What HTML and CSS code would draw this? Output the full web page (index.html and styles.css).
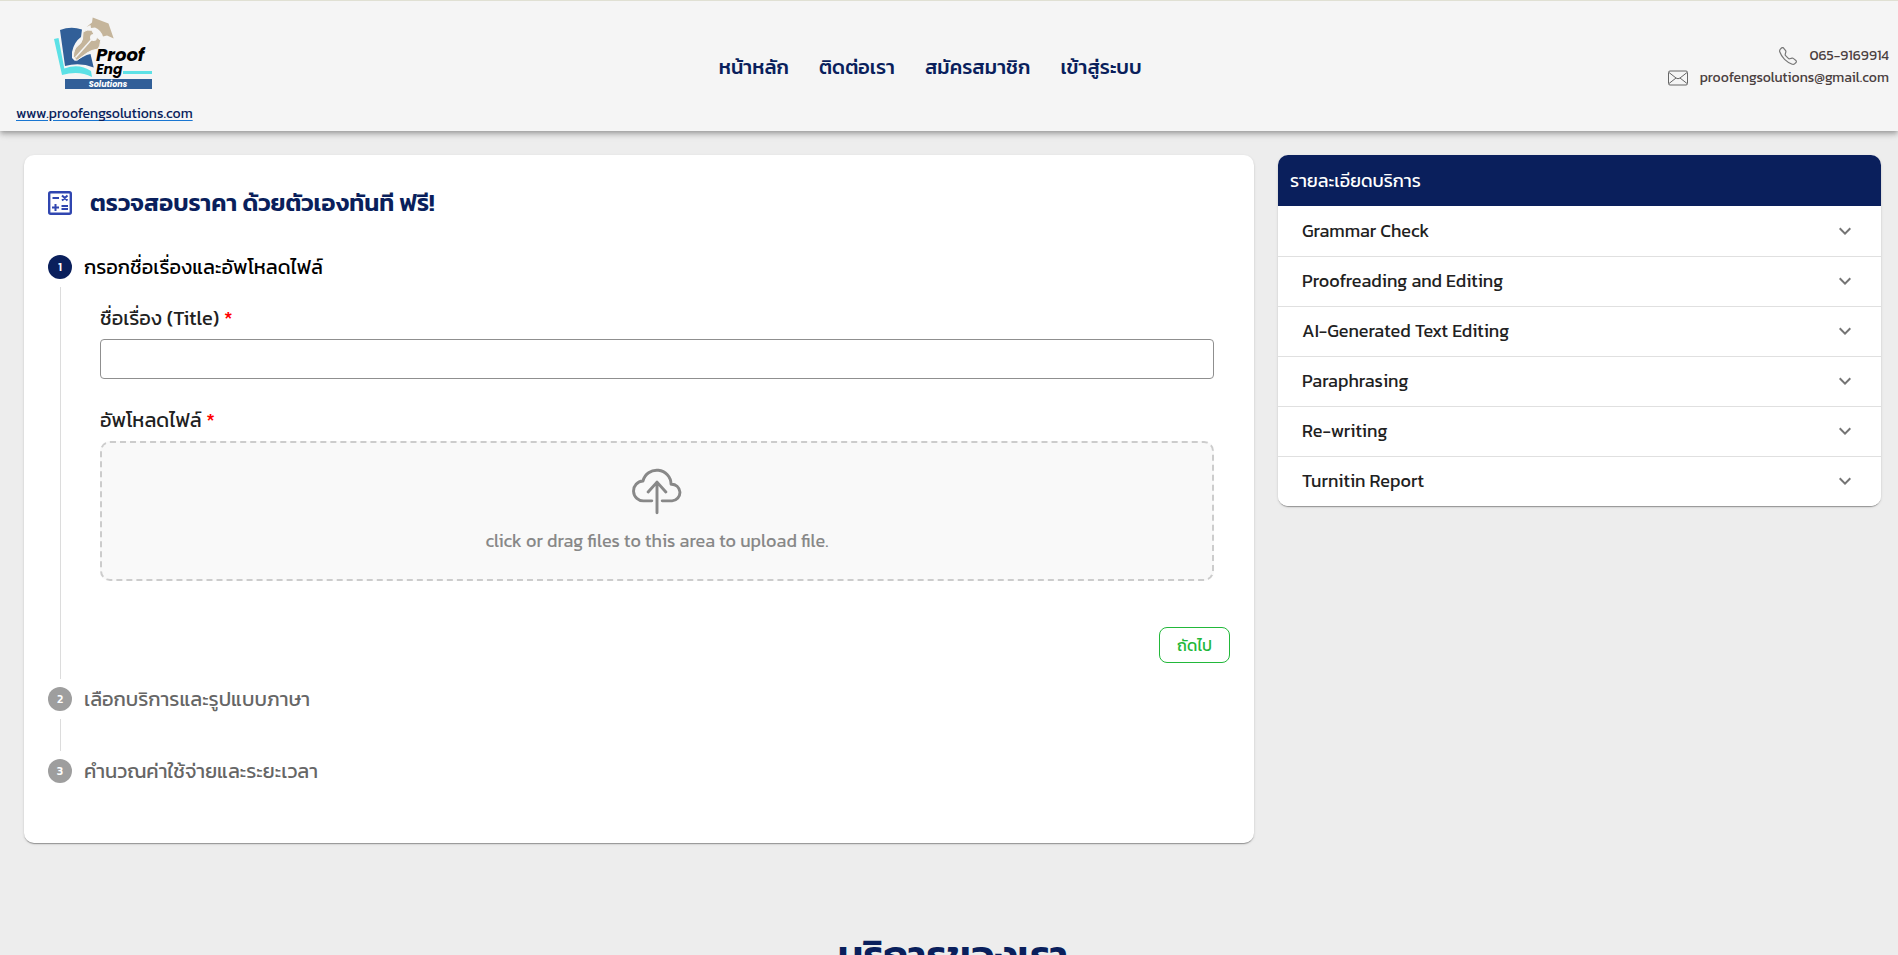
FILE: index.html
```html
<!DOCTYPE html>
<html lang="th">
<head>
<meta charset="utf-8">
<meta name="viewport" content="width=device-width, initial-scale=1">
<title>Proof Eng Solutions</title>
<link rel="stylesheet" href="styles.css">
</head>
<body>
<header class="header">
  <div class="brand">
    <svg class="logo" viewBox="0 0 100 74" role="img" aria-label="Proof Eng Solutions">
      <path d="M0 22L4.500 21L10.300 51.500Q25 46 37 54L38 60Q25 53 8 58Z" fill="#5ce1e6"/>
      <path d="M6 13Q17 9 28 12.500L27 20Q20 25 18 35L18 41L21 44L32.700 38L36.500 37L39.700 50.500Q26 45 11 49Z" fill="#315f98"/>
      <path d="M29 15Q33 12 37.700 13.300L41 19L46.700 23.300Q46 30 44 32Q37 33 33 36L22.700 43.500L19.300 39.300Q20 32 23 29.500Q28 26 28.500 22Z" fill="#c5b59b" stroke="#f5f5f5" stroke-width="1"/>
      <circle cx="39.500" cy="20.500" r="3.500" fill="#f5f5f5"/>
      <path d="M38 22L21.500 40.500" stroke="#f5f5f5" stroke-width="1.500"/>
      <path d="M38.700 0.500L54.500 6.500L59.700 21.500L53 18.500L49 19.500Q47 13 41 10.500L37 11L36.500 8L32.500 10L38 5.500Z" fill="#c5b59b"/>
      <text class="logo-name" x="42" y="44" font-size="18">Proof</text>
      <text class="logo-name" x="42" y="57" font-size="14">Eng</text>
      <path d="M69 54H98V57H69Z" fill="#5ce1e6"/>
      <path d="M11 62H98V72H11Z" fill="#315f98"/>
      <text class="logo-tag" x="54" y="70" font-size="8" text-anchor="middle">Solutions</text>
    </svg>
    <a class="site-link" href="#">www.proofengsolutions.com</a>
  </div>
  <nav class="nav">
    <a href="#">หน้าหลัก</a>
    <a href="#">ติดต่อเรา</a>
    <a href="#">สมัครสมาชิก</a>
    <a href="#">เข้าสู่ระบบ</a>
  </nav>
  <div class="contact">
    <div class="contact-row">
      <svg class="phone" viewBox="0 0 16 16" fill="currentColor" aria-hidden="true"><path d="M3.654 1.328a.678.678 0 0 0-1.015-.063L1.605 2.300c-.483.484-.661 1.169-.45 1.770a17.600 17.600 0 0 0 4.168 6.608 17.600 17.600 0 0 0 6.608 4.168c.601.211 1.286.033 1.770-.450l1.034-1.034a.678.678 0 0 0-.063-1.015l-2.307-1.794a.68.68 0 0 0-.580-.122l-2.190.547a1.750 1.750 0 0 1-1.657-.459L5.482 8.062a1.750 1.750 0 0 1-.460-1.657l.548-2.190a.68.68 0 0 0-.122-.580zM1.884.511a1.745 1.745 0 0 1 2.612.163L6.290 2.980c.329.423.445.974.315 1.494l-.547 2.190a.68.68 0 0 0 .178.643l2.457 2.457a.68.68 0 0 0 .644.178l2.189-.547a1.750 1.750 0 0 1 1.494.315l2.306 1.794c.829.645.905 1.870.163 2.611l-1.034 1.034c-.740.740-1.846 1.065-2.877.702a18.600 18.600 0 0 1-7.010-4.420 18.600 18.600 0 0 1-4.420-7.009c-.362-1.030-.037-2.137.703-2.877z"/></svg>
      <span>065-9169914</span>
    </div>
    <div class="contact-row">
      <svg class="mail" viewBox="0 0 20 16" fill="none" stroke="currentColor" aria-hidden="true"><rect x=".5" y="1" width="19" height="14" rx="1.500"/><path d="M1 2.500L8 8Q10 9.500 12 8L19 2.500M1 13.500L8 8M19 13.500L12 8"/></svg>
      <span>proofengsolutions@gmail.com</span>
    </div>
  </div>
</header>

<main class="main">
  <section class="card">
    <h1 class="card-title">
      <svg class="calc" viewBox="0 0 24 24" fill="none" stroke="currentColor" stroke-width="2" aria-hidden="true"><rect x="1.200" y="1.200" width="21.600" height="21.600" rx="1.500" stroke-width="2.400"/><path d="M4.500 7H11M13.500 15H20M13.500 18H20M4 16.500H11M7.500 13V20M14 4.500L19.500 9.500M19.500 4.500L14 9.500"/></svg>
      <span>ตรวจสอบราคา ด้วยตัวเองทันที ฟรี!</span>
    </h1>

    <form class="stepper">
      <div class="step"><span class="step-num active">1</span><span class="step-label active">กรอกชื่อเรื่องและอัพโหลดไฟล์</span></div>
      <div class="step-content">
        <div class="fields">
          <label class="label" for="title">ชื่อเรื่อง (Title) <b class="req">*</b></label>
          <input class="input" id="title" type="text">
          <label class="label" for="file">อัพโหลดไฟล์ <b class="req">*</b></label>
          <label class="drop">
            <input class="file" id="file" type="file">
            <svg class="cloud" viewBox="1 1 48 48" fill="none" stroke="currentColor" stroke-width="2.800" stroke-linecap="round" stroke-linejoin="round" aria-hidden="true"><path d="M20 33.500H12.500A9.500 9.500 0 0 1 11.500 14.500A13.700 13.700 0 0 1 38.500 17.500A8 8 0 0 1 39.500 33.500H30"/><path d="M25 45V15.500M16.500 25L25 15.500L33.500 25"/></svg>
            <span>click or drag files to this area to upload file.</span>
          </label>
        </div>
        <button class="next" type="button">ถัดไป</button>
      </div>
      <div class="step"><span class="step-num">2</span><span class="step-label">เลือกบริการและรูปแบบภาษา</span></div>
      <div class="connector"></div>
      <div class="step"><span class="step-num">3</span><span class="step-label">คำนวณค่าใช้จ่ายและระยะเวลา</span></div>
    </form>
  </section>

  <aside class="services">
    <h2 class="services-title">รายละเอียดบริการ</h2>
    <button class="service" type="button"><span>Grammar Check</span><svg class="chev" viewBox="0 0 24 24" aria-hidden="true"><path d="M7.410 8.590L12 13.170l4.590-4.580L18 10l-6 6-6-6z"/></svg></button>
    <button class="service" type="button"><span>Proofreading and Editing</span><svg class="chev" viewBox="0 0 24 24" aria-hidden="true"><path d="M7.410 8.590L12 13.170l4.590-4.580L18 10l-6 6-6-6z"/></svg></button>
    <button class="service" type="button"><span>AI-Generated Text Editing</span><svg class="chev" viewBox="0 0 24 24" aria-hidden="true"><path d="M7.410 8.590L12 13.170l4.590-4.580L18 10l-6 6-6-6z"/></svg></button>
    <button class="service" type="button"><span>Paraphrasing</span><svg class="chev" viewBox="0 0 24 24" aria-hidden="true"><path d="M7.410 8.590L12 13.170l4.590-4.580L18 10l-6 6-6-6z"/></svg></button>
    <button class="service" type="button"><span>Re-writing</span><svg class="chev" viewBox="0 0 24 24" aria-hidden="true"><path d="M7.410 8.590L12 13.170l4.590-4.580L18 10l-6 6-6-6z"/></svg></button>
    <button class="service" type="button"><span>Turnitin Report</span><svg class="chev" viewBox="0 0 24 24" aria-hidden="true"><path d="M7.410 8.590L12 13.170l4.590-4.580L18 10l-6 6-6-6z"/></svg></button>
  </aside>
</main>
<h2 class="section-title">บริการของเรา</h2>
</body>
</html>
```
FILE: styles.css
```css
* { box-sizing: border-box; }
html { height: 100%; overflow: hidden; }
body {
  margin: 0;
  min-height: 100%;
  background: #ededed;
  color: #212121;
  font-family: Kanit, Roboto, "Noto Sans Thai", "Noto Sans", sans-serif;
  font-size: 18px;
  line-height: 24px;
}
.header {
  display: flex;
  justify-content: space-between;
  align-items: center;
  padding: 6px 9px 5px 16px;
  background: #f5f5f5;
  border-top: 1px solid #e0e0d3;
  box-shadow: 0 2px 4px -1px rgba(0,0,0,.2), 0 4px 5px rgba(0,0,0,.14), 0 1px 10px rgba(0,0,0,.12);
}
.brand { display: flex; flex-direction: column; align-items: flex-start; gap: 11px; padding-top: 10px; }
.logo { width: 100px; height: 74px; margin-left: 38px; }
.logo-name { font-family: Poppins, Kanit, sans-serif; font-weight: 700; font-style: italic; fill: #000; }
.logo-tag { font-family: Poppins, Kanit, sans-serif; font-weight: 700; font-style: italic; fill: #fff; }
.site-link { color: #0a1f5c; font-size: 14px; text-decoration-color: #1976d2; text-underline-offset: 2px; }
.nav { display: flex; gap: 30px; }
.nav a { color: #0a1f5c; font-size: 20px; font-weight: 500; text-decoration: none; }
.contact { display: flex; flex-direction: column; align-items: flex-end; color: #4a4040; font-size: 14px; line-height: 22px; }
.contact-row { display: flex; align-items: center; gap: 12px; }
.phone { width: 18px; height: 18px; color: #777; }
.mail { width: 20px; height: 16px; color: #666; }

.main {
  display: grid;
  grid-template-columns: 2.04fr 1fr;
  align-items: start;
  gap: 24px;
  padding: 24px 17px 0 24px;
}
.card, .services {
  border-radius: 10px;
  background: #fff;
  box-shadow: 0 2px 1px -1px rgba(0,0,0,.2), 0 1px 1px rgba(0,0,0,.14), 0 1px 3px rgba(0,0,0,.12);
}
.card { padding: 32px 24px 60px; }
.card-title { display: flex; align-items: center; gap: 18px; margin: 0 0 36px; color: #0a1f5c; font-size: 24px; font-weight: 600; line-height: 32px; }
.calc { width: 24px; height: 24px; color: #3046b0; }
.step { display: flex; align-items: center; gap: 12px; height: 24px; }
.step-num { display: grid; place-items: center; width: 24px; height: 24px; border-radius: 50%; background: #9e9e9e; color: #fff; font-size: 12px; font-weight: 500; }
.step-num.active { background: #0a1f5c; }
.step-label { color: #666; font-size: 20px; }
.step-label.active { color: #000; }
.step-content { margin: 8px 0 8px 12px; padding: 16px 0 16px 39px; border-left: 1px solid #dcdcdc; }
.fields { display: flex; flex-direction: column; padding-right: 16px; }
.label { font-size: 20px; line-height: 30px; }
.req { color: #f00; font-weight: 400; }
.input { height: 40px; margin: 6px 0 26px; padding: 0 12px; border: 1px solid #8f8f8f; border-radius: 4px; font: inherit; }
.drop { display: flex; flex-direction: column; align-items: center; gap: 12px; height: 140px; margin-top: 6px; padding-top: 24px; border: 2px dashed #ccc; border-radius: 10px; background: #f9f9f9; color: #888; }
.file { position: absolute; width: 1px; height: 1px; opacity: 0; }
.cloud { width: 50px; height: 50px; }
.next { display: block; width: 71px; height: 36px; margin: 46px 0 0 auto; border: 1px solid #22b83a; border-radius: 8px; background: #fff; color: #22b83a; font: inherit; font-size: 16px; }
.connector { height: 32px; margin: 8px 0 8px 12px; border-left: 1px solid #dcdcdc; }

.services { overflow: hidden; }
.services-title { margin: 0; padding: 14px 12px 13px; background: #0a1f5c; color: #fff; font-size: 18px; font-weight: 400; line-height: 24px; }
.service { display: flex; align-items: center; justify-content: space-between; width: 100%; height: 50px; padding: 0 24px 1px; border: 0; border-top: 1px solid #e0e0e0; background: #fff; color: #212121; font: inherit; }
.services-title + .service { padding-bottom: 0; border-top: 0; }
.chev { width: 24px; height: 24px; fill: #757575; }
.section-title { margin: 82px 0 0; padding-left: 8px; color: #0a1f5c; font-size: 40px; font-weight: 600; line-height: 60px; text-align: center; }
```
